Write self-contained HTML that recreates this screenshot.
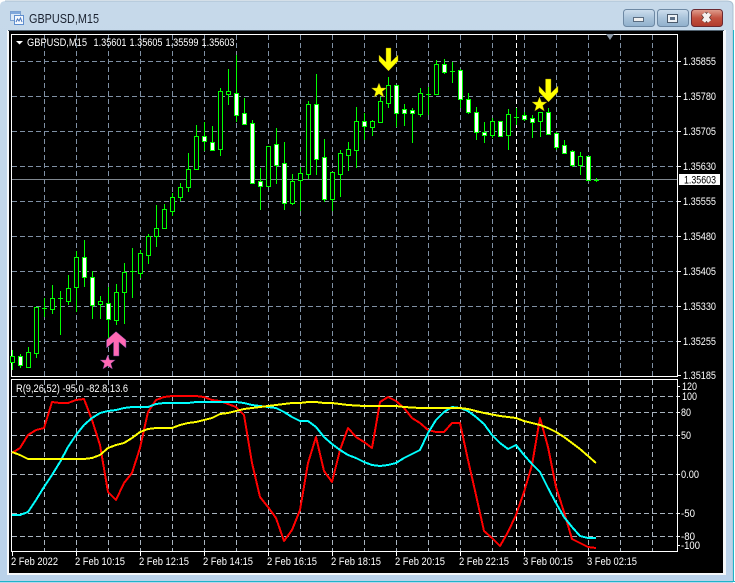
<!DOCTYPE html>
<html><head><meta charset="utf-8"><style>
html,body{margin:0;padding:0;background:#fff;width:735px;height:583px;overflow:hidden}
svg{display:block}
text{font-family:"Liberation Sans",sans-serif;font-size:11px;fill:#fff}
</style></head><body>
<svg width="735" height="583" viewBox="0 0 735 583" xmlns="http://www.w3.org/2000/svg">
<defs>
<linearGradient id="t" x1="0" y1="0" x2="0" y2="1"><stop offset="0" stop-color="#c6d9ea"/><stop offset="1" stop-color="#bad2ea"/></linearGradient>
<linearGradient id="b" x1="0" y1="0" x2="0" y2="1"><stop offset="0" stop-color="#cfdfee"/><stop offset=".5" stop-color="#a9c3da"/><stop offset="1" stop-color="#90b0cc"/></linearGradient>
<linearGradient id="c" x1="0" y1="0" x2="0" y2="1"><stop offset="0" stop-color="#e0a090"/><stop offset=".5" stop-color="#c2513f"/><stop offset="1" stop-color="#b03a2c"/></linearGradient>
</defs>
<path d="M0 583V6Q0 1 6 1H727Q733 1 733 6V583Z" fill="url(#t)"/>
<path d="M5 1H727Q733 1 733 6V581" fill="none" stroke="#a9bfd0"/>
<rect x="0" y="581" width="735" height="1" fill="#1eb4c8"/>
<rect x="733" y="30" width="1" height="552" fill="#1eb4c8"/>
<rect x="7" y="30" width="719" height="545" fill="#f4f7fa"/>
<rect x="8" y="30" width="716" height="1" fill="#50606e"/>
<rect x="9" y="31" width="714" height="542" fill="#000"/>

<!-- title icon -->
<rect x="10.500" y="11.500" width="10" height="9" fill="#dce9f7" stroke="#7ba0d0"/>
<rect x="14.500" y="15.500" width="9" height="9" fill="#f4f8fd" stroke="#5f8fcf"/>
<rect x="11" y="12" width="9" height="2" fill="#7fa8dc"/>
<path d="M16 22l1.500-3 1.500 2 1.500-3 1.500 4" fill="none" stroke="#4a78c0"/>
<text x="29" y="23" textLength="70" lengthAdjust="spacingAndGlyphs" style="font-size:12.500px;fill:#1a2230">GBPUSD,M15</text>

<!-- buttons -->
<rect x="623.500" y="9.500" width="31" height="17" rx="3" fill="url(#b)" stroke="#6d88a3"/>
<rect x="633.500" y="17.500" width="10" height="4" fill="#f0f0f0" stroke="#5a6c80"/>
<rect x="657.500" y="9.500" width="31" height="17" rx="3" fill="url(#b)" stroke="#6d88a3"/>
<rect x="667.500" y="14.500" width="10" height="8" fill="#eef2f6" stroke="#4a5a6c"/>
<rect x="670" y="17" width="5" height="3" fill="#5c6f86"/>
<rect x="691.500" y="9.500" width="31" height="17" rx="3" fill="url(#c)" stroke="#6a2830"/>
<path d="M703.500 13.500l6 8M709.500 13.500l-6 8" stroke="#50302c" stroke-width="5.500"/>
<path d="M703.500 13.500l6 8M709.500 13.500l-6 8" stroke="#f4f0ee" stroke-width="4"/>

<!-- grid -->
<g stroke="#7f90a4" fill="none" stroke-dasharray="5 3" shape-rendering="crispEdges">
<path d="M12 61.500H677M12 96.500H677M12 131.500H677M12 166.500H677M12 201.500H677M12 236.500H677M12 271.500H677M12 306.500H677M12 341.500H677"/>
<path d="M44.500 35V376M76.500 35V376M108.500 35V376M140.500 35V376M172.500 35V376M204.500 35V376M236.500 35V376M268.500 35V376M300.500 35V376M332.500 35V376M364.500 35V376M396.500 35V376M428.500 35V376M460.500 35V376M492.500 35V376M524.500 35V376M556.500 35V376M588.500 35V376M620.500 35V376M652.500 35V376"/>
</g>
<g stroke="#a9b4bf" fill="none" stroke-dasharray="5 3" shape-rendering="crispEdges">
<path d="M12 396.500H677M12 412.500H677M12 435.500H677M12 474.500H677M12 513.500H677M12 536.500H677"/>
<path d="M44.500 380V551M76.500 380V551M108.500 380V551M140.500 380V551M172.500 380V551M204.500 380V551M236.500 380V551M268.500 380V551M300.500 380V551M332.500 380V551M364.500 380V551M396.500 380V551M428.500 380V551M460.500 380V551M492.500 380V551M524.500 380V551M556.500 380V551M588.500 380V551M620.500 380V551M652.500 380V551"/>
</g>
<path d="M516.500 35V376M516.500 380V551" stroke="#fff" stroke-dasharray="5 3" shape-rendering="crispEdges"/>
<rect x="12" y="179" width="666" height="1" fill="#808890"/>

<!-- frames -->
<g fill="none" stroke="#fff" shape-rendering="crispEdges">
<rect x="11.500" y="34.500" width="666" height="342"/>
<rect x="11.500" y="379.500" width="666" height="172"/>
<path d="M677 61.500h4M677 96.500h4M677 131.500h4M677 166.500h4M677 201.500h4M677 236.500h4M677 271.500h4M677 306.500h4M677 341.500h4M677 375.500h4M677 386.500h3M677 396.500h3M677 412.500h3M677 435.500h3M677 474.500h3M677 513.500h3M677 536.500h3M677 545.500h3"/>
<path d="M12.500 552v4M76.500 552v4M140.500 552v4M204.500 552v4M268.500 552v4M332.500 552v4M396.500 552v4M460.500 552v4M524.500 552v4M588.500 552v4"/>
</g>
<path d="M606 34h8l-4 6z" fill="#8a97a6"/>
<path d="M16 41h7l-3.500 3.500z" fill="#fff"/>

<!-- wicks -->
<path fill="none" stroke="#0f0" shape-rendering="crispEdges" d="M12.500 350V370M20.500 354V368M28.500 347V368M36.500 307V358M44.500 298V317M52.500 285V314M60.500 291V335M68.500 275V305M76.500 251V312M84.500 240V287M92.500 271V319M100.500 296V319M108.500 287V340M116.500 284V325M124.500 263V324M132.500 248V298M140.500 250V278M148.500 234V264M156.500 205V247M164.500 204V228M172.500 193V216M180.500 183V201M188.500 153V192M196.500 125V169M204.500 122V151M212.500 126V151M220.500 88V156M228.500 69V105M236.500 55V122M244.500 98V125M252.500 120V183M260.500 168V210M268.500 146V187M276.500 128V184M284.500 142V210M292.500 174V205M300.500 167V211M308.500 101V179M316.500 74V175M324.500 139V202M332.500 172V211M340.500 150V197M348.500 142V171M356.500 107V168M364.500 113V140M372.500 120V136M380.500 97V123M388.500 77V108M396.500 85V127M404.500 104V126M412.500 108V143M420.500 88V117M428.500 87V115M436.500 60V94M444.500 59V74M452.500 62V83M460.500 69V108M468.500 93V114M476.500 107V140M484.500 122V143M492.500 118V138M500.500 121V137M508.500 109V150M516.500 108V125M524.500 112V121M532.500 115V138M540.500 112V137M548.500 108V134M556.500 132V150M564.500 140V153M572.500 150V167M580.500 152V175M588.500 156V180M596.500 178V182"/>
<path fill="none" stroke="#0f0" shape-rendering="crispEdges" d="M42 308.500h5M58 298.500h5M130 271.500h5M426 94.500h5M450 71.500h5M514 117.500h5M594 180.500h5"/>
<!-- hollow -->
<path fill="#000" stroke="#0f0" shape-rendering="crispEdges" d="M10.500 356.500h4v6h-4zM26.500 352.500h4v15h-4zM34.500 307.500h4v46h-4zM50.500 298.500h4v11h-4zM66.500 288.500h4v13h-4zM74.500 257.500h4v30h-4zM98.500 301.500h4v3h-4zM114.500 292.500h4v28h-4zM122.500 272.500h4v20h-4zM138.500 253.500h4v20h-4zM146.500 236.500h4v19h-4zM154.500 228.500h4v8h-4zM162.500 209.500h4v19h-4zM170.500 197.500h4v14h-4zM178.500 187.500h4v10h-4zM186.500 169.500h4v18h-4zM194.500 136.500h4v33h-4zM218.500 91.500h4v58h-4zM226.500 91.500h4v3h-4zM266.500 146.500h4v40h-4zM290.500 181.500h4v22h-4zM298.500 173.500h4v7h-4zM306.500 104.500h4v70h-4zM330.500 172.500h4v27h-4zM338.500 153.500h4v21h-4zM346.500 149.500h4v6h-4zM354.500 121.500h4v29h-4zM370.500 121.500h4v6h-4zM378.500 101.500h4v21h-4zM386.500 85.500h4v18h-4zM418.500 93.500h4v21h-4zM434.500 64.500h4v30h-4zM490.500 121.500h4v14h-4zM506.500 114.500h4v21h-4zM538.500 112.500h4v9h-4zM578.500 156.500h4v9h-4z"/>
<!-- white -->
<path fill="#fff" stroke="#0f0" shape-rendering="crispEdges" d="M18.500 356.500h4v9h-4zM82.500 257.500h4v20h-4zM90.500 277.500h4v28h-4zM106.500 303.500h4v16h-4zM202.500 136.500h4v5h-4zM210.500 142.500h4v8h-4zM234.500 93.500h4v22h-4zM242.500 113.500h4v11h-4zM250.500 123.500h4v60h-4zM258.500 181.500h4v5h-4zM274.500 144.500h4v21h-4zM282.500 163.500h4v40h-4zM314.500 104.500h4v55h-4zM322.500 157.500h4v42h-4zM362.500 121.500h4v5h-4zM394.500 85.500h4v28h-4zM402.500 109.500h4v4h-4zM410.500 110.500h4v3h-4zM442.500 64.500h4v8h-4zM458.500 70.500h4v29h-4zM466.500 99.500h4v13h-4zM474.500 112.500h4v20h-4zM482.500 132.500h4v3h-4zM498.500 121.500h4v15h-4zM522.500 115.500h4v4h-4zM530.500 118.500h4v4h-4zM546.500 112.500h4v22h-4zM554.500 133.500h4v14h-4zM562.500 145.500h4v8h-4zM570.500 151.500h4v14h-4zM586.500 156.500h4v24h-4z"/>

<!-- markers -->
<path d="M116 331.500L126 340V348L119 342V356H113.500V342L106.500 348V340Z" fill="#ff69b4" stroke="#5a3a8a" stroke-width=".5"/>
<path d="M107.700 355l2 5h5.500l-4.300 3.500 1.600 5.500-4.800-3.100-4.800 3.100 1.600-5.500-4.300-3.500h5.500z" fill="#ff69b4" stroke="#5a3a8a" stroke-width=".4"/>
<path d="M386 48H391V62L398 55V61L388.500 71L379 61V55L386 62Z" fill="#ff0" stroke="#8a7a10" stroke-width=".4"/>
<path d="M545.500 79H551V93L558 86V92L548.500 102L539 92V86L545.500 93Z" fill="#ff0" stroke="#8a7a10" stroke-width=".4"/>
<path d="M379 83l2 5h5.500l-4.300 3.500 1.600 5.500-4.800-3.100-4.800 3.100 1.600-5.500-4.300-3.500h5.500z" fill="#ff0" stroke="#8a7a10" stroke-width=".4"/>
<path d="M539.500 97l2 5h5.500l-4.300 3.500 1.600 5.500-4.800-3.100-4.800 3.100 1.600-5.500-4.300-3.500h5.500z" fill="#ff0" stroke="#8a7a10" stroke-width=".4"/>

<!-- indicator lines -->
<g fill="none" stroke-width="2" shape-rendering="crispEdges" stroke-linejoin="round">
<polyline stroke="#f00" points="12,453 20,448 28,435 36,430 44,428 52,402 60,403 68,403 76,400 84,399 92,420 100,445 108,492 116,500 124,483 132,473 140,448 148,412 156,400 164,397 172,396 180,396 188,396 196,396 204,397 212,400 220,401 228,404 236,407 244,415 252,463 260,497 268,507 276,518 284,541 292,530 300,510 308,463 316,437 324,471 332,482 340,450 348,428 356,437 364,442 372,448 380,402 388,397 396,401 404,408 412,418 420,423 428,430 436,432 444,432 452,423 460,423 468,460 476,495 484,531 492,538 500,546 508,532 516,515 524,492 532,465 540,418 548,447 556,487 564,512 572,539 580,543 588,547 596,548"/>
<polyline stroke="#0ff" points="12,515 20,515 28,512 36,500 44,487 52,475 60,462 68,447 76,435 84,425 92,418 100,413 108,411 116,410 124,408 132,407 140,407 148,407 156,404 164,403 172,403 180,403 188,403 196,402 204,402 212,402 220,402 228,402 236,402 244,403 252,405 260,406 268,407 276,408 284,412 292,417 300,421 308,421 316,427 324,437 332,444 340,450 348,455 356,458 364,462 372,465 380,466 388,465 396,463 404,458 412,454 420,450 428,433 436,420 444,412 452,407 460,408 468,411 476,417 484,424 492,435 500,443 508,449 516,445 524,455 532,464 540,472 548,488 556,503 564,517 572,527 580,536 588,538 596,538"/>
<polyline stroke="#ff0" points="12,452 20,455 28,459 36,459 44,459 52,459 60,459 68,459 76,459 84,459 92,458 100,455 108,448 116,445 124,443 132,438 140,432 148,429 156,428 164,428 172,428 180,425 188,423 196,422 204,420 212,418 220,414 228,413 236,411 244,409 252,408 260,407 268,406 276,405 284,404 292,403 300,403 308,402 316,402 324,403 332,403 340,404 348,405 364,406 396,406 404,407 420,408 460,408 468,409 484,413 500,416 508,417 516,418 524,421 532,423 540,425 548,428 556,432 564,437 572,443 580,449 588,456 596,463"/>
</g>

<!-- price label -->
<rect x="679" y="174" width="41" height="11" fill="#fff"/>
<text x="684" y="183.500" textLength="32" lengthAdjust="spacingAndGlyphs" style="fill:#000">1.35603</text>

<!-- price axis -->
<text x="683" y="65" textLength="33" lengthAdjust="spacingAndGlyphs">1.35855</text>
<text x="683" y="100" textLength="33" lengthAdjust="spacingAndGlyphs">1.35780</text>
<text x="683" y="135" textLength="33" lengthAdjust="spacingAndGlyphs">1.35705</text>
<text x="683" y="170" textLength="33" lengthAdjust="spacingAndGlyphs">1.35630</text>
<text x="683" y="205" textLength="33" lengthAdjust="spacingAndGlyphs">1.35555</text>
<text x="683" y="240" textLength="33" lengthAdjust="spacingAndGlyphs">1.35480</text>
<text x="683" y="275" textLength="33" lengthAdjust="spacingAndGlyphs">1.35405</text>
<text x="683" y="310" textLength="33" lengthAdjust="spacingAndGlyphs">1.35330</text>
<text x="683" y="345" textLength="33" lengthAdjust="spacingAndGlyphs">1.35255</text>
<text x="683" y="379" textLength="33" lengthAdjust="spacingAndGlyphs">1.35185</text>

<text x="682" y="390" textLength="15" lengthAdjust="spacingAndGlyphs">120</text>
<text x="682" y="400" textLength="15" lengthAdjust="spacingAndGlyphs">100</text>
<text x="681" y="416" textLength="10" lengthAdjust="spacingAndGlyphs">80</text>
<text x="681" y="439" textLength="10" lengthAdjust="spacingAndGlyphs">50</text>
<text x="681" y="478" textLength="18" lengthAdjust="spacingAndGlyphs">0.00</text>
<text x="681" y="517" textLength="14" lengthAdjust="spacingAndGlyphs">-50</text>
<text x="681" y="540" textLength="14" lengthAdjust="spacingAndGlyphs">-80</text>
<text x="681" y="549" textLength="19" lengthAdjust="spacingAndGlyphs">-100</text>

<!-- legends -->
<text x="27" y="46" textLength="60" lengthAdjust="spacingAndGlyphs">GBPUSD,M15</text>
<text x="93.500" y="46" textLength="33" lengthAdjust="spacingAndGlyphs">1.35601</text>
<text x="129.500" y="46" textLength="33" lengthAdjust="spacingAndGlyphs">1.35605</text>
<text x="165.500" y="46" textLength="33" lengthAdjust="spacingAndGlyphs">1.35599</text>
<text x="201.500" y="46" textLength="33" lengthAdjust="spacingAndGlyphs">1.35603</text>
<text x="16" y="392" textLength="112" lengthAdjust="spacingAndGlyphs">R(9,26,52) -95.0 -82.8 13.6</text>

<!-- time axis -->
<text x="11" y="565" textLength="47" lengthAdjust="spacingAndGlyphs">2 Feb 2022</text>
<text x="75" y="565" textLength="50" lengthAdjust="spacingAndGlyphs">2 Feb 10:15</text>
<text x="139" y="565" textLength="50" lengthAdjust="spacingAndGlyphs">2 Feb 12:15</text>
<text x="203" y="565" textLength="50" lengthAdjust="spacingAndGlyphs">2 Feb 14:15</text>
<text x="267" y="565" textLength="50" lengthAdjust="spacingAndGlyphs">2 Feb 16:15</text>
<text x="331" y="565" textLength="50" lengthAdjust="spacingAndGlyphs">2 Feb 18:15</text>
<text x="395" y="565" textLength="50" lengthAdjust="spacingAndGlyphs">2 Feb 20:15</text>
<text x="459" y="565" textLength="50" lengthAdjust="spacingAndGlyphs">2 Feb 22:15</text>
<text x="523" y="565" textLength="50" lengthAdjust="spacingAndGlyphs">3 Feb 00:15</text>
<text x="587" y="565" textLength="50" lengthAdjust="spacingAndGlyphs">3 Feb 02:15</text>
</svg>
</body></html>
